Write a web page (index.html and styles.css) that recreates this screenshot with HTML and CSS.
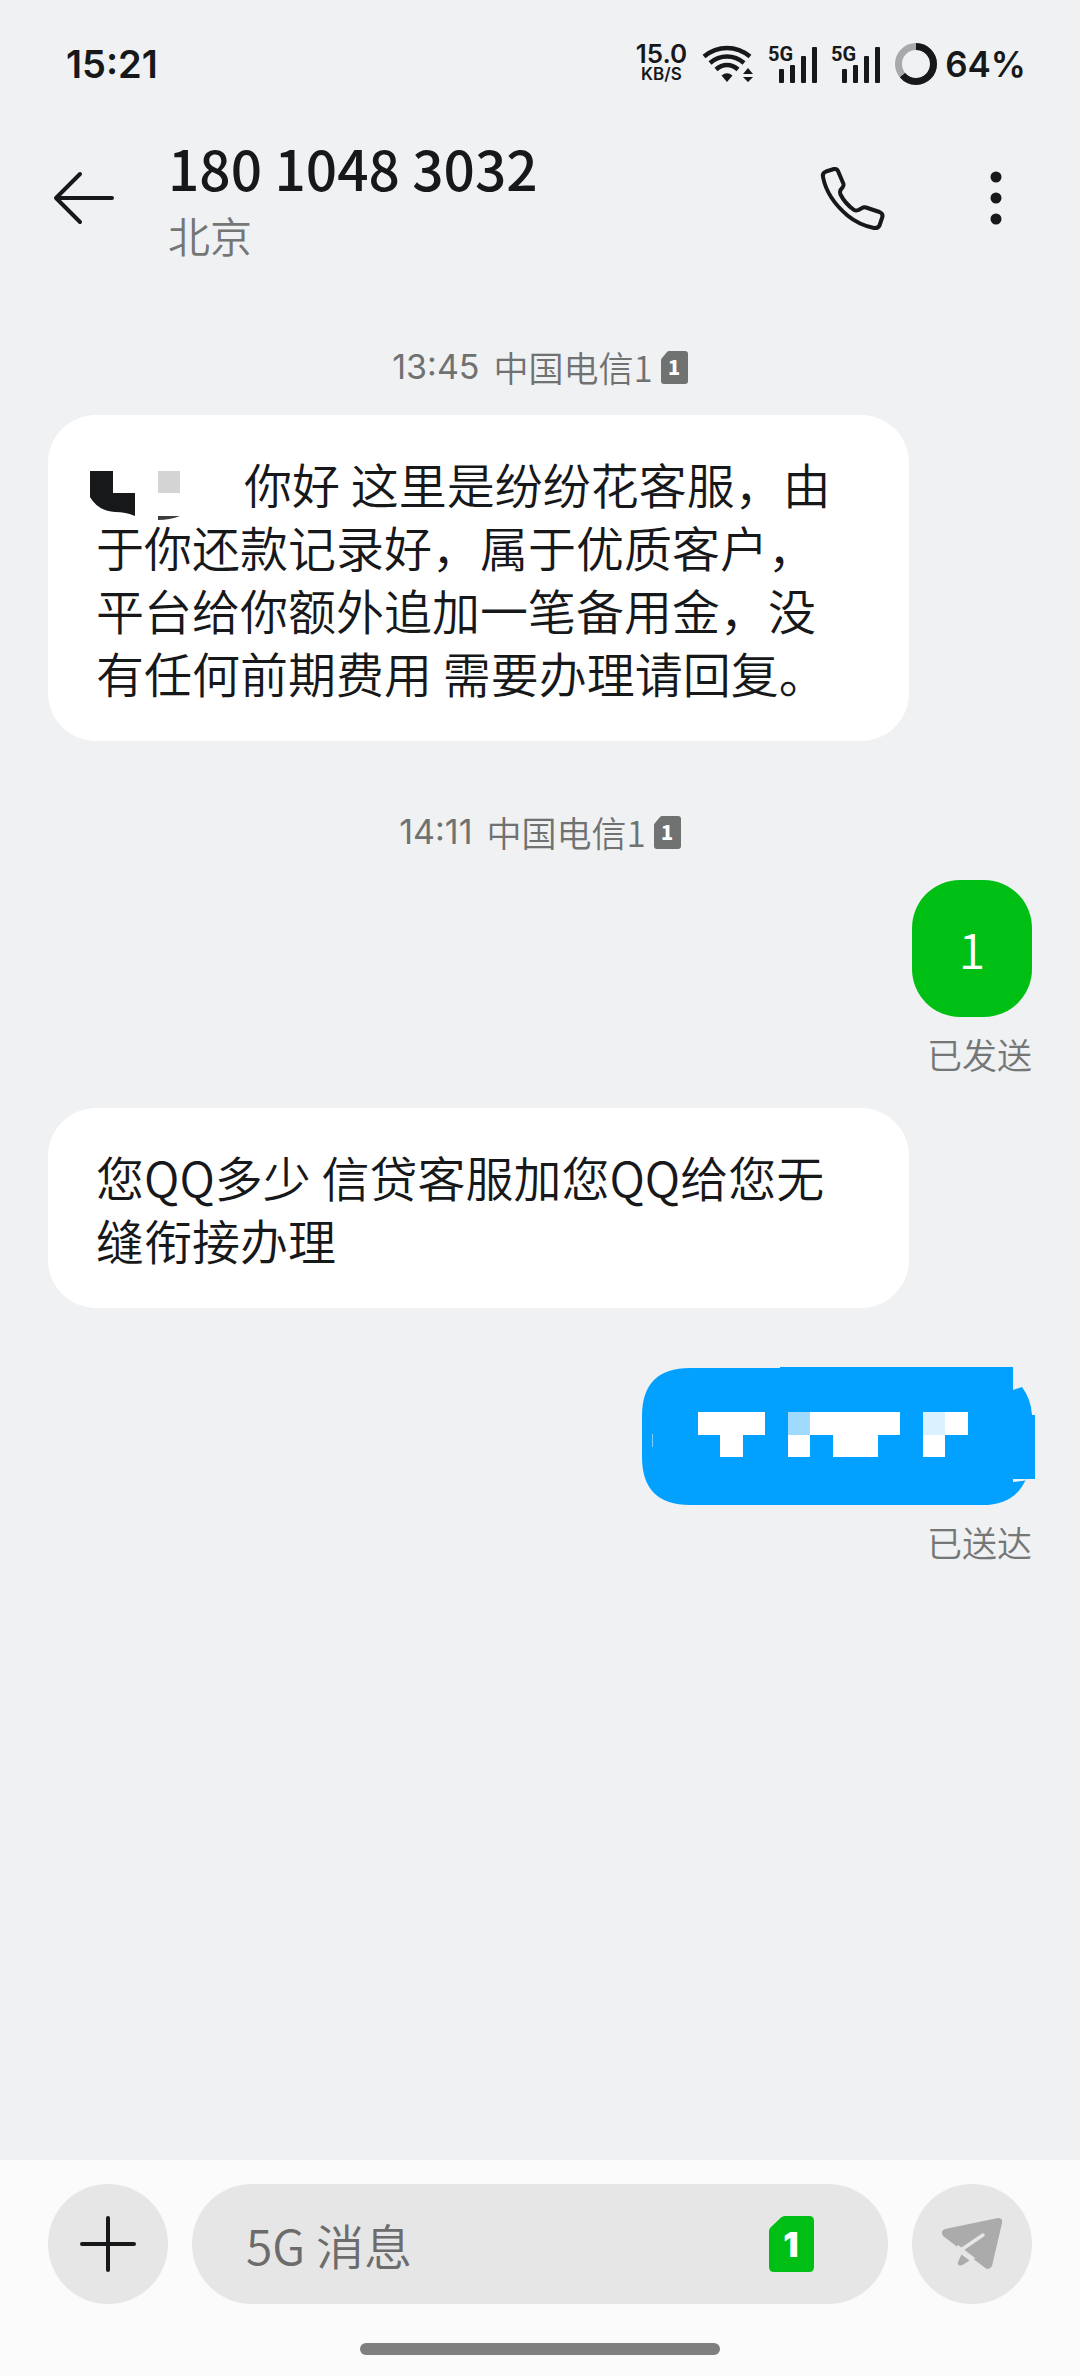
FILE: index.html
```
<!DOCTYPE html>
<html lang="zh-CN">
<head>
    <meta charset="UTF-8">
    <meta name="viewport" content="width=device-width, initial-scale=1.0">
    <title>180 1048 3032</title>
    <link rel="stylesheet" href="styles.css">
</head>
<body>

    <div class="status-bar">
        <span class="clock">15:21</span>
        <div class="status-icons">
            <div class="speed">
                <span class="speed-value">15.0</span>
                <span class="speed-unit">KB/S</span>
            </div>
            <svg class="wifi" width="52" height="38" viewBox="0 0 52 38">
                <g fill="none" stroke="#17181a" stroke-width="4.5">
                    <path d="M2 11.5Q12.500 3 25 3Q37.500 3 48 11.500"/>
                    <path d="M8 18Q15.500 11.500 25 11.500Q34.500 11.500 42 18"/>
                    <path d="M14 24.500Q19 20 25 20Q31 20 36 24.500"/>
                </g>
                <path d="M19.500 30.500Q25 26 30.500 30.500L25 37Z" fill="#17181a"/>
                <path d="M46 23l5 6H41zM46 37l5-5H41z" fill="#17181a"/>
            </svg>
            <svg class="signal" width="48" height="38" viewBox="0 0 48 38">
                <text x="-1" y="16">5G</text>
                <rect x="10" y="24" width="5" height="14" rx="1"/>
                <rect x="21" y="20" width="5" height="18" rx="1"/>
                <rect x="32" y="11" width="5" height="27" rx="1"/>
                <rect x="43" y="2" width="5" height="36" rx="1"/>
            </svg>
            <svg class="signal" width="48" height="38" viewBox="0 0 48 38">
                <text x="-1" y="16">5G</text>
                <rect x="10" y="24" width="5" height="14" rx="1"/>
                <rect x="21" y="20" width="5" height="18" rx="1"/>
                <rect x="32" y="11" width="5" height="27" rx="1"/>
                <rect x="43" y="2" width="5" height="36" rx="1"/>
            </svg>
            <div class="battery">
                <svg width="42" height="42" viewBox="0 0 42 42">
                    <circle cx="21" cy="21" r="17.500" fill="none" stroke="#a8a9aa" stroke-width="7"/>
                    <circle cx="21" cy="21" r="17.500" fill="none" stroke="#17181a" stroke-width="7" pathLength="100" stroke-dasharray="64 36" transform="rotate(-90 21 21)"/>
                </svg>
                <span>64%</span>
            </div>
        </div>
    </div>

    <header class="header">
        <button class="icon-btn" type="button" aria-label="返回">
            <svg width="66" height="66" viewBox="0 0 66 66" fill="none" stroke="#17181a" stroke-width="4" stroke-linecap="round" stroke-linejoin="round">
                <path d="M61 33H5M29 9L5 33L29 57"/>
            </svg>
        </button>
        <div class="contact">
            <h1>180 1048 3032</h1>
            <p>北京</p>
        </div>
        <button class="icon-btn" type="button" aria-label="拨打电话">
            <svg width="66" height="66" viewBox="0 0 66 66" fill="none" stroke="#17181a" stroke-width="4" stroke-linejoin="round">
                <path d="M4 12Q3 8 7 6.500L15 4Q18 3.500 19 6L24.500 19Q25 21 23.500 22.500L21.500 25Q20.500 27 21.500 29.500Q26 38.500 35 45Q37 46 39.500 45L44 42.500Q45.500 42 47 42.500L60.500 47Q64 48.500 63.500 51.500L60.500 60.500Q59 63.500 55 63Q40 60 28.500 50.500Q8 33 4 12Z"/>
            </svg>
        </button>
        <button class="icon-btn" type="button" aria-label="更多">
            <svg width="66" height="66" viewBox="0 0 66 66" fill="#17181a">
                <circle cx="33" cy="12" r="5.500"/>
                <circle cx="33" cy="33" r="5.500"/>
                <circle cx="33" cy="54" r="5.500"/>
            </svg>
        </button>
    </header>

    <main class="messages">
        <div class="date">
            <time>13:45</time>
            <span>中国电信1</span>
            <svg class="sim" width="27" height="33" viewBox="0 0 27 33">
                <path d="M8 0H24Q27 0 27 3V30Q27 33 24 33H3Q0 33 0 30V9Q0 8 1 7L6 1Q7 0 8 0Z"/>
                <text x="13" y="24">1</text>
            </svg>
        </div>
        <div class="bubble received"><svg class="mosaic" width="148" height="46" viewBox="0 -3 148 46"><path d="M-6 0H17V22H39V45Q30 41 19 41Q2 40-6 26Z" fill="#17181a"/><path d="M62 0H84V22H62Z" fill="#d4d4d4"/><path d="M62 45H84Q74 49 62 49Z" fill="#3c3c3d"/></svg>你好 这里是纷纷花客服，由于你还款记录好，属于优质客户，平台给你额外追加一笔备用金，没有任何前期费用 需要办理请回复。</div>

        <div class="date later">
            <time>14:11</time>
            <span>中国电信1</span>
            <svg class="sim" width="27" height="33" viewBox="0 0 27 33">
                <path d="M8 0H24Q27 0 27 3V30Q27 33 24 33H3Q0 33 0 30V9Q0 8 1 7L6 1Q7 0 8 0Z"/>
                <text x="13" y="24">1</text>
            </svg>
        </div>
        <div class="bubble sent">1</div>
        <div class="state">已发送</div>

        <div class="bubble received next">您QQ多少 信贷客服加您QQ给您无缝衔接办理</div>

        <!-- 号码已打码 -->
        <svg class="masked" width="390" height="137" viewBox="0 0 390 137">
            <path d="M48 0H138V-1H371V22L380 19Q389 31 390 47H393V111H384Q373 137 340 137H48Q0 137 0 89V48Q0 0 48 0Z" fill="#02a0ff"/>
            <path d="M371 111H384L383 112.500L371 114Z" fill="#eff1f3"/>
            <path d="M10.500 66V79" stroke="#7fd0ff" stroke-width="1"/>
            <path d="M56 44H123V67H101V89H78V67H56ZM146 67H168V89H146ZM168 44H258V67H236V89H191V67H168ZM303 44H326V67H303V89H281V67H303Z" fill="#fff"/>
            <path d="M146 44H168V67H146Z" fill="#a0dbff"/>
            <path d="M281 44H303V67H281Z" fill="#daf1ff"/>
        </svg>
        <div class="state">已送达</div>
    </main>

    <footer class="footer">
        <form class="compose">
            <button class="round-btn" type="button" aria-label="添加">
                <svg width="60" height="60" viewBox="0 0 60 60" stroke="#17181a" stroke-width="4" stroke-linecap="round">
                    <path d="M4 30H56M30 4V56"/>
                </svg>
            </button>
            <div class="field">
                <input type="text" placeholder="5G 消息" aria-label="5G 消息">
                <button class="sim-btn" type="button" aria-label="切换 SIM 卡">
                    <svg width="45" height="56" viewBox="0 0 45 56">
                        <path d="M16 0H40Q45 0 45 5V51Q45 56 40 56H5Q0 56 0 51V15Q0 13 1.500 11.500L12 1.500Q13.500 0 16 0Z" fill="#00bf14"/>
                        <text x="22" y="41">1</text>
                    </svg>
                </button>
            </div>
            <button class="round-btn" type="submit" aria-label="发送">
                <svg width="60" height="52" viewBox="0 0 60 52">
                    <path d="M3 11L56 0Q61 0 60 5L50 48Q48 52 44 50.500L1 18Q-2 13 3 11Z" fill="#ababab"/>
                    <path d="M15 28.500L32 41.500" stroke="#e6e6e6" stroke-width="3.500"/>
                    <path d="M19.500 36.500L27.500 42.500L20.500 47Q15 48.500 16 44Z" fill="#ababab"/>
                    <path d="M41 17L19 32" stroke="#e6e6e6" stroke-width="3.500" stroke-linecap="round"/>
                </svg>
            </button>
        </form>
        <div class="home-bar"></div>
    </footer>

</body>
</html>
```

FILE: styles.css
```
* {
    box-sizing: border-box;
}
body {
    display: flex;
    flex-direction: column;
    min-height: 100vh;
    margin: 0;
    background-color: #eff1f3;
    color: #17181a;
    font-family: "Noto Sans CJK SC", sans-serif;
    font-weight: 350;
}
button {
    padding: 0;
    border: none;
    background: none;
    cursor: pointer;
}
svg {
    display: block;
    overflow: visible;
}

/* 状态栏 */
.status-bar {
    display: flex;
    align-items: center;
    justify-content: space-between;
    height: 128px;
    padding: 0 54px 0 66px;
    font-family: Inter, sans-serif;
    font-weight: 600;
}
.clock {
    font-size: 38px;
}
.status-icons {
    display: flex;
    align-items: center;
    gap: 15px;
}
.speed {
    display: flex;
    flex-direction: column;
    align-items: center;
}
.speed-value {
    font-size: 26px;
    line-height: 20px;
}
.speed-unit {
    font-size: 17px;
    line-height: 20px;
}
.signal text {
    font-family: Roboto, sans-serif;
    font-size: 20px;
    font-weight: 700;
}
.signal {
    fill: #17181a;
}
.battery {
    display: flex;
    align-items: center;
    gap: 8px;
    font-size: 35px;
}

/* 标题栏 */
.header {
    display: flex;
    align-items: center;
    height: 140px;
    padding: 0 51px;
}
.icon-btn + .icon-btn {
    margin-left: 78px;
}
.contact {
    flex: 1;
    padding: 5px 0 0 51px;
}
.contact h1 {
    margin: 0;
    font-size: 55px;
    font-weight: 500;
    line-height: 67px;
}
.contact p {
    margin: 0;
    color: #757676;
    font-size: 42px;
    line-height: 67px;
}

/* 消息列表 */
.messages {
    display: flex;
    flex: 1;
    flex-direction: column;
    align-items: flex-start;
    padding: 74px 48px 48px;
}
.date {
    display: flex;
    align-items: center;
    align-self: center;
    margin-bottom: 23px;
    color: #707171;
    font-size: 35px;
    line-height: 50px;
}
.date.later {
    margin-top: 66px;
}
.date time {
    font-family: Inter, sans-serif;
    font-size: 34px;
    font-weight: 400;
}
.date span {
    margin: 0 8px 0 14px;
}
.sim {
    fill: #707171;
}
.sim text,
.sim-btn text {
    fill: #fff;
    font-weight: 900;
    text-anchor: middle;
}
.sim text {
    font-size: 20px;
}
.bubble {
    max-width: 88%;
    padding: 37px 48px;
    border-radius: 48px;
    font-size: 48px;
    line-height: 63px;
}
.received {
    width: 861px;
    background-color: #fff;
}
.sent {
    align-self: flex-end;
    min-width: 120px;
    padding: 37px 46px;
    background-color: #00bf14;
    color: #fff;
    text-align: center;
}
.mosaic {
    display: inline-block;
    vertical-align: middle;
}
.state {
    align-self: flex-end;
    margin-top: 11px;
    color: #757676;
    font-size: 35px;
    line-height: 52px;
}
.next {
    margin-top: 28px;
}
.masked {
    align-self: flex-end;
    margin-top: 60px;
}

/* 输入栏 */
.footer {
    padding: 24px 48px 21px;
    background-color: #fbfbfb;
}
.compose {
    display: flex;
    gap: 24px;
}
.round-btn {
    display: flex;
    flex: none;
    align-items: center;
    justify-content: center;
    width: 120px;
    height: 120px;
    border-radius: 50%;
    background-color: #e6e6e6;
}
.field {
    display: flex;
    flex: 1;
    align-items: center;
    min-width: 0;
    height: 120px;
    padding: 0 74px 0 54px;
    border-radius: 60px;
    background-color: #e6e6e6;
}
.field input {
    flex: 1;
    min-width: 0;
    padding: 0;
    border: none;
    outline: none;
    background: none;
    color: #17181a;
    font-family: inherit;
    font-size: 48px;
    font-weight: inherit;
}
.field input::placeholder {
    color: #6c6c6c;
    opacity: 1;
}
.sim-btn text {
    font-family: Inter, sans-serif;
    font-size: 34px;
}
.home-bar {
    width: 360px;
    height: 12px;
    margin: 39px auto 0;
    border-radius: 6px;
    background-color: #7f7f7f;
}
```
